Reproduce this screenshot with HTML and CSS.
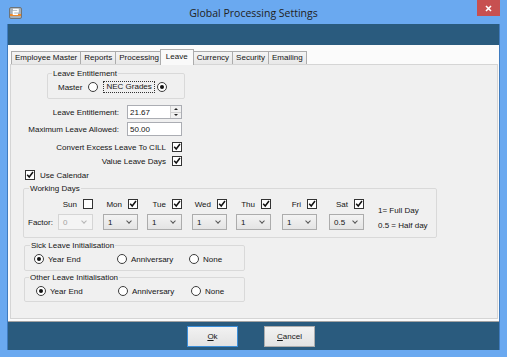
FILE: index.html
```html
<!DOCTYPE html>
<html lang="en">
    <head>
        <meta charset="UTF-8" />
        <title>Global Processing Settings</title>
        <link rel="stylesheet" href="styles.css">
    </head>
    <body>
        <div class="window">
            <div class="titlebar">
                <svg class="app-icon" width="13" height="12" viewBox="0 0 13 12">
                    <rect x="0.5" y="0.5" width="12" height="11" rx="1.5" fill="#a9b0b6" stroke="#6d747a" />
                    <rect x="1" y="7" width="11" height="2" fill="#ee8a2a" />
                    <path d="M4 2.5h5v2.3H4.5v2.4H9" fill="none" stroke="#fff" stroke-width="1.5" />
                </svg>
                <div class="title">Global Processing Settings</div>
                <div class="close-btn">
                    <svg width="7" height="7" viewBox="0 0 7 7">
                        <path d="M1 1l5 5M6 1l-5 5" stroke="#fff" stroke-width="1.6" />
                    </svg>
                </div>
            </div>

            <div class="client">
                <div class="band-top"></div>

                <div class="tab-host">
                    <div class="tabs">
                        <div class="tab">Employee Master</div>
                        <div class="tab">Reports</div>
                        <div class="tab">Processing</div>
                        <div class="tab selected">Leave</div>
                        <div class="tab">Currency</div>
                        <div class="tab">Security</div>
                        <div class="tab">Emailing</div>
                    </div>

                    <div class="tab-panel">
                        <fieldset class="group grp-entitle">
                            <legend>Leave Entitlement</legend>
                            <div class="entitle-row">
                                <span>Master</span>
                                <span class="radio master-radio"></span>
                                <span class="focus">NEC Grades</span>
                                <span class="radio on nec-radio"></span>
                            </div>
                        </fieldset>

                        <div class="field-row first-field">
                            <span class="field-label">Leave Entitlement:</span>
                            <div class="textbox spin">
                                <span>21.67</span>
                                <span class="spin-btns"><i class="up"></i><i class="down"></i></span>
                            </div>
                        </div>
                        <div class="field-row second-field">
                            <span class="field-label">Maximum Leave Allowed:</span>
                            <div class="textbox"><span>50.00</span></div>
                        </div>

                        <div class="check-row first-check">
                            <span class="check-label">Convert Excess Leave To CILL</span>
                            <span class="check on"><svg width="8" height="8" viewBox="0 0 8 8"><path d="M1.2 3.8l2 2.2 3.8-5" fill="none" stroke="#111" stroke-width="1.5" /></svg></span>
                        </div>
                        <div class="check-row">
                            <span class="check-label">Value Leave Days</span>
                            <span class="check on"><svg width="8" height="8" viewBox="0 0 8 8"><path d="M1.2 3.8l2 2.2 3.8-5" fill="none" stroke="#111" stroke-width="1.5" /></svg></span>
                        </div>
                        <div class="check-row calendar-row">
                            <span class="check on"><svg width="8" height="8" viewBox="0 0 8 8"><path d="M1.2 3.8l2 2.2 3.8-5" fill="none" stroke="#111" stroke-width="1.5" /></svg></span>
                            <span>Use Calendar</span>
                        </div>

                        <fieldset class="group grp-days">
                            <legend>Working Days</legend>
                            <div class="days-grid">
                                <span></span>
                                <div class="day-head"><span>Sun</span><span class="check"></span></div>
                                <div class="day-head"><span>Mon</span><span class="check on"><svg width="8" height="8" viewBox="0 0 8 8"><path d="M1.2 3.8l2 2.2 3.8-5" fill="none" stroke="#111" stroke-width="1.5" /></svg></span></div>
                                <div class="day-head"><span>Tue</span><span class="check on"><svg width="8" height="8" viewBox="0 0 8 8"><path d="M1.2 3.8l2 2.2 3.8-5" fill="none" stroke="#111" stroke-width="1.5" /></svg></span></div>
                                <div class="day-head"><span>Wed</span><span class="check on"><svg width="8" height="8" viewBox="0 0 8 8"><path d="M1.2 3.8l2 2.2 3.8-5" fill="none" stroke="#111" stroke-width="1.5" /></svg></span></div>
                                <div class="day-head"><span>Thu</span><span class="check on"><svg width="8" height="8" viewBox="0 0 8 8"><path d="M1.2 3.8l2 2.2 3.8-5" fill="none" stroke="#111" stroke-width="1.5" /></svg></span></div>
                                <div class="day-head"><span>Fri</span><span class="check on"><svg width="8" height="8" viewBox="0 0 8 8"><path d="M1.2 3.8l2 2.2 3.8-5" fill="none" stroke="#111" stroke-width="1.5" /></svg></span></div>
                                <div class="day-head"><span>Sat</span><span class="check on"><svg width="8" height="8" viewBox="0 0 8 8"><path d="M1.2 3.8l2 2.2 3.8-5" fill="none" stroke="#111" stroke-width="1.5" /></svg></span></div>
                                <div class="notes">
                                    <div>1= Full Day</div>
                                    <div>0.5 = Half day</div>
                                </div>

                                <span class="factor">Factor:</span>
                                <div class="combo disabled">0</div>
                                <div class="combo">1</div>
                                <div class="combo">1</div>
                                <div class="combo">1</div>
                                <div class="combo">1</div>
                                <div class="combo">1</div>
                                <div class="combo">0.5</div>
                            </div>
                        </fieldset>

                        <fieldset class="group grp-init">
                            <legend>Sick Leave Initialisation</legend>
                            <div class="opt-line">
                                <span class="opt opt-a"><span class="radio on"></span>Year End</span>
                                <span class="opt opt-b"><span class="radio"></span>Anniversary</span>
                                <span class="opt"><span class="radio"></span>None</span>
                            </div>
                        </fieldset>

                        <fieldset class="group grp-init grp-other">
                            <legend>Other Leave Initialisation</legend>
                            <div class="opt-line">
                                <span class="opt opt-a"><span class="radio on"></span>Year End</span>
                                <span class="opt opt-b"><span class="radio"></span>Anniversary</span>
                                <span class="opt"><span class="radio"></span>None</span>
                            </div>
                        </fieldset>
                    </div>
                </div>

                <div class="band-bottom">
                    <button class="btn default"><u>O</u>k</button>
                    <button class="btn"><u>C</u>ancel</button>
                </div>
            </div>
        </div>
    </body>
</html>
```

FILE: styles.css
```css
* {
    box-sizing: border-box;
}

body {
    margin: 0;
    font-family: "Liberation Sans", Arial, sans-serif;
    font-size: 8px;
    color: #141414;
    background: #6aa9f0;
}

div.window {
    width: 507px;
    height: 357px;
    background: #6aa9f0;
    display: flex;
    flex-direction: column;
}

/* title bar */
.titlebar {
    height: 24px;
    display: grid;
    grid-template-columns: 1fr auto 1fr;
    align-items: center;
}

.app-icon {
    margin-left: 9px;
    margin-top: 1px;
}

.title {
    font-family: "Open Sans", "Liberation Sans", sans-serif;
    font-size: 10.5px;
    color: #222;
    padding-top: 2px;
}

.close-btn {
    justify-self: end;
    align-self: start;
    width: 23px;
    height: 16px;
    margin-right: 7px;
    background: #c75050;
    display: flex;
    align-items: center;
    justify-content: center;
}

/* client area */
.client {
    flex: 1;
    margin: 0 7px 7px;
    border-left: 1px solid #3f7cc0;
    border-right: 1px solid #3f7cc0;
    display: flex;
    flex-direction: column;
}

.band-top {
    height: 21px;
    background: #2a5b7e;
}

.tab-host {
    height: 277px;
    background: #fbfbfb;
    padding: 4px 1px 2px 2px;
    border-bottom: 1px solid #a3a3a3;
    display: flex;
    flex-direction: column;
}

.tabs {
    display: flex;
    align-items: flex-end;
    height: 16px;
    padding-left: 1px;
    margin-bottom: -1px;
    position: relative;
    z-index: 1;
}

.tab {
    height: 13px;
    margin: 0 -1px 1px 0;
    padding: 0 3px;
    border: 1px solid #acacac;
    border-bottom: none;
    background: linear-gradient(#f4f4f4, #e8e8e8);
    line-height: 12px;
    white-space: nowrap;
}

.tab.selected {
    height: 16px;
    margin: 0 -1px 0 -2px;
    padding: 0 5px;
    background: #f9f9f9;
    line-height: 13px;
    position: relative;
    z-index: 2;
}

.tab-panel {
    flex: 1;
    background: #f0f0f0;
    border: 1px solid #d5d5d5;
}

/* group boxes */
.group {
    margin: 0;
    padding: 0;
    min-width: 0;
    border: 1px solid #d9d9d9;
    border-radius: 2px;
}

.group legend {
    padding: 0 1px;
    height: 9px;
    line-height: 9px;
}

.grp-entitle {
    margin: 4px 0 0 36px;
    width: 138px;
    padding-bottom: 2px;
}

.grp-entitle legend {
    margin-left: 4px;
}

.entitle-row {
    height: 18px;
    display: flex;
    align-items: center;
    padding-left: 10px;
}

.master-radio {
    margin-left: 6px;
}

.focus {
    margin-left: 5px;
    padding: 0 2px;
    border: 1px dotted #333;
    line-height: 10px;
}

.nec-radio {
    margin-left: 2px;
}

/* radio and check boxes */
.radio {
    width: 10px;
    height: 10px;
    border: 1px solid #3c3c3c;
    border-radius: 50%;
    background: #fff;
    display: inline-flex;
    align-items: center;
    justify-content: center;
    flex: none;
}

.radio.on::after {
    content: "";
    width: 4px;
    height: 4px;
    border-radius: 50%;
    background: #111;
}

.check {
    width: 10px;
    height: 10px;
    border: 1px solid #333;
    background: #fff;
    display: inline-flex;
    flex: none;
}

/* text fields */
.field-row {
    display: flex;
    align-items: center;
    height: 14px;
}

.first-field {
    margin-top: 6px;
}

.second-field {
    margin-top: 3px;
}

.field-label {
    width: 108px;
    text-align: right;
    margin-right: 8px;
}

.textbox {
    width: 55px;
    height: 14px;
    border: 1px solid #abadb3;
    background: #fff;
    padding-left: 2px;
    display: flex;
    align-items: center;
}

.textbox.spin {
    justify-content: space-between;
}

.spin-btns {
    width: 11px;
    height: 12px;
    display: flex;
    flex-direction: column;
    border-left: 1px solid #d0d0d0;
    margin-right: 0;
}

.spin-btns i {
    flex: 1;
    display: flex;
    align-items: center;
    justify-content: center;
    background: #f1f1f1;
}

.spin-btns i.up {
    border-bottom: 1px solid #d0d0d0;
}

.spin-btns i.up::before {
    content: "";
    border: 2px solid transparent;
    border-top: none;
    border-bottom: 2px solid #222;
}

.spin-btns i.down::before {
    content: "";
    border: 2px solid transparent;
    border-bottom: none;
    border-top: 2px solid #222;
}

/* check rows */
.check-row {
    display: flex;
    align-items: center;
    height: 12px;
    margin-top: 2px;
}

.first-check {
    margin-top: 5px;
}

.check-label {
    width: 155px;
    text-align: right;
    margin-right: 6px;
}

.calendar-row {
    margin-left: 14px;
    gap: 5px;
}

/* working days */
.grp-days {
    margin: 3px 0 0 12px;
    width: 414px;
    padding: 4px 0 7px;
}

.grp-days legend {
    margin-left: 5px;
}

.days-grid {
    display: grid;
    grid-template-columns: 34px 45px 44px 45px 44px 46px 47px 49px auto;
    grid-template-rows: 14px 16px;
    row-gap: 3px;
}

.day-head {
    width: 35px;
    display: flex;
    align-items: center;
    justify-content: flex-end;
    gap: 6px;
}

.factor {
    padding-left: 4px;
    align-self: center;
}

.combo {
    width: 35px;
    height: 16px;
    border: 1px solid #acacac;
    background: linear-gradient(#f3f3f3, #e4e4e4);
    padding-left: 4px;
    display: flex;
    align-items: center;
    position: relative;
}

.combo::after {
    content: "";
    position: absolute;
    right: 6px;
    top: 4px;
    width: 3px;
    height: 3px;
    border-right: 1px solid #555;
    border-bottom: 1px solid #555;
    transform: rotate(45deg);
}

.combo.disabled {
    background: #f4f4f4;
    border-color: #d5d5d5;
    color: #a3a3a3;
}

.combo.disabled::after {
    border-color: #b5b5b5;
}

.notes {
    grid-column: 9;
    grid-row: 1 / span 2;
    padding-top: 6px;
    line-height: 15px;
}

/* initialisation groups */
.grp-init {
    margin: 3px 0 0 13px;
    width: 221px;
    padding: 2px 0 4px;
}

.grp-init legend {
    margin-left: 5px;
}

.opt-line {
    display: flex;
    align-items: center;
    height: 14px;
    padding-left: 9px;
}

.opt {
    display: flex;
    align-items: center;
    gap: 4px;
}

.opt-a {
    width: 83px;
}

.opt-b {
    width: 72px;
}

.grp-other {
    margin-top: 2px;
    padding-bottom: 3px;
}

.grp-other legend {
    margin-left: 4px;
}

.grp-other .opt-line {
    padding-left: 11px;
}

.grp-other .opt-a {
    width: 82px;
}

.grp-other .opt-b {
    width: 73px;
}

/* bottom buttons */
.band-bottom {
    height: 28px;
    background: #2a5b7e;
    display: flex;
    justify-content: center;
    gap: 26px;
    padding: 4px 5px 0 0;
}

.btn {
    width: 51px;
    height: 21px;
    border: 1px solid #adadad;
    background: linear-gradient(#f2f2f2, #e3e3e3);
    font: inherit;
    color: #141414;
    padding: 0;
}

.btn.default {
    border-color: #3c8ed8;
}
```
